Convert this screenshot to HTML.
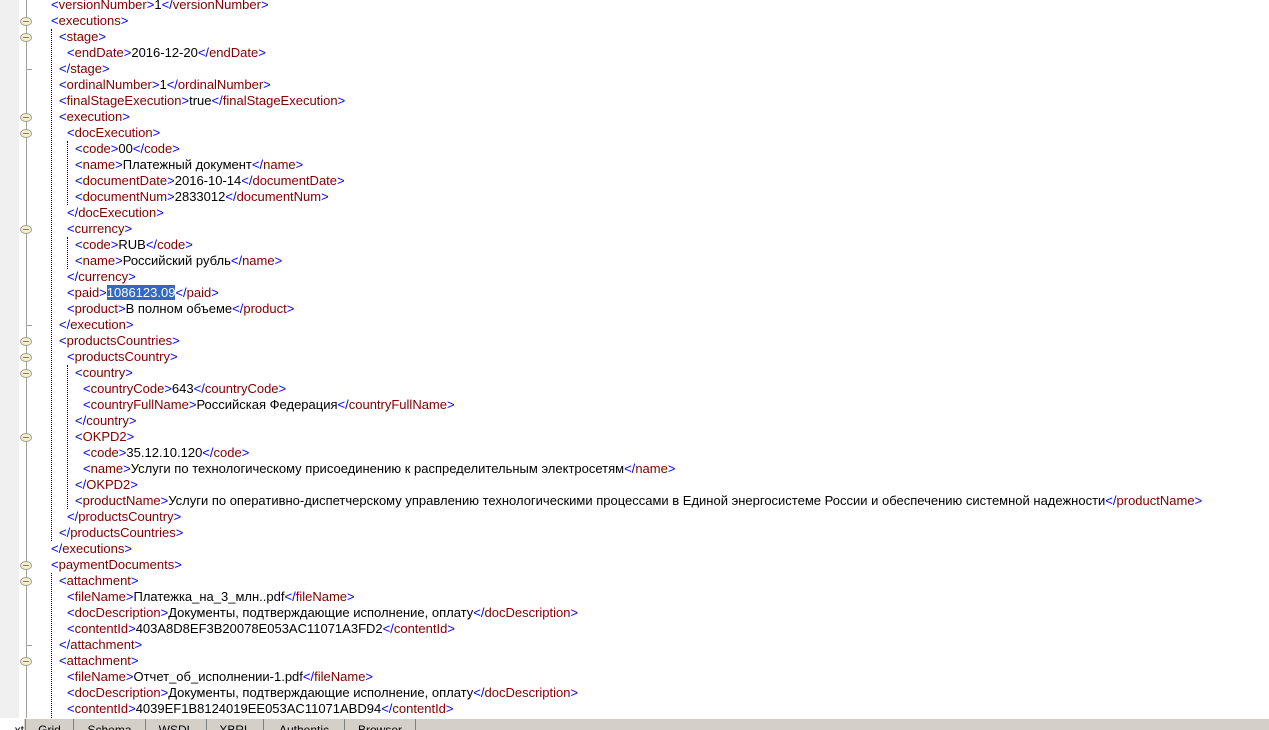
<!DOCTYPE html>
<html><head><meta charset="utf-8"><style>
body{margin:0;width:1269px;height:729px;overflow:hidden;background:#fff;position:relative;font-family:"Liberation Sans",Arial,sans-serif;font-size:13px}
.strip{position:absolute;left:0;top:0;width:19px;height:718px;background:#f0f0f0}
.vl{position:absolute;left:26px;top:0;width:1px;height:718px;background:#a0a0a0}
.l{position:absolute;height:16px;line-height:16px;white-space:nowrap;color:#000}
.b{color:#0000ff}.r{color:#800000}
.f{position:absolute;left:20px;width:12px;height:9px;border:1px solid #a0a090;border-radius:50%;background:#f4f0c8;box-sizing:border-box}
.f:after{content:"";position:absolute;left:2px;right:2px;top:3px;height:1px;background:#808070}
.t{position:absolute;left:26px;width:6px;height:1px;background:#a0a0a0}
.d{position:absolute;width:0;border-left:1px dotted #000}
.sel{background:#316ac5;color:#fff}
.tabs{position:absolute;left:0;top:718px;width:1269px;height:11px;background:#d4d0c8;border-top:1px solid #fff}
.tab{position:absolute;top:0;height:11px;border-left:1px solid #808080;overflow:hidden;font-size:12px;line-height:22px;text-align:center}
</style></head><body>
<div class="strip"></div><div class="vl"></div>

<div class="f" style="top:17px"></div>
<div class="f" style="top:33px"></div>
<div class="f" style="top:113px"></div>
<div class="f" style="top:129px"></div>
<div class="f" style="top:225px"></div>
<div class="f" style="top:337px"></div>
<div class="f" style="top:353px"></div>
<div class="f" style="top:369px"></div>
<div class="f" style="top:433px"></div>
<div class="f" style="top:561px"></div>
<div class="f" style="top:577px"></div>
<div class="f" style="top:657px"></div>
<div class="t" style="top:69px"></div>
<div class="t" style="top:325px"></div>
<div class="t" style="top:645px"></div>

<div class="d" style="left:51px;top:29px;height:512px"></div>
<div class="d" style="left:67px;top:141px;height:64px"></div>
<div class="d" style="left:67px;top:237px;height:32px"></div>
<div class="d" style="left:67px;top:365px;height:144px"></div>
<div class="d" style="left:51px;top:573px;height:145px"></div>

<div class="l" style="top:-3px;left:51px"><span class="b">&lt;</span><span class="r">versionNumber</span><span class="b">&gt;</span>1<span class="b">&lt;/</span><span class="r">versionNumber</span><span class="b">&gt;</span></div>
<div class="l" style="top:13px;left:51px"><span class="b">&lt;</span><span class="r">executions</span><span class="b">&gt;</span></div>
<div class="l" style="top:29px;left:59px"><span class="b">&lt;</span><span class="r">stage</span><span class="b">&gt;</span></div>
<div class="l" style="top:45px;left:67px"><span class="b">&lt;</span><span class="r">endDate</span><span class="b">&gt;</span>2016-12-20<span class="b">&lt;/</span><span class="r">endDate</span><span class="b">&gt;</span></div>
<div class="l" style="top:61px;left:59px"><span class="b">&lt;/</span><span class="r">stage</span><span class="b">&gt;</span></div>
<div class="l" style="top:77px;left:59px"><span class="b">&lt;</span><span class="r">ordinalNumber</span><span class="b">&gt;</span>1<span class="b">&lt;/</span><span class="r">ordinalNumber</span><span class="b">&gt;</span></div>
<div class="l" style="top:93px;left:59px"><span class="b">&lt;</span><span class="r">finalStageExecution</span><span class="b">&gt;</span>true<span class="b">&lt;/</span><span class="r">finalStageExecution</span><span class="b">&gt;</span></div>
<div class="l" style="top:109px;left:59px"><span class="b">&lt;</span><span class="r">execution</span><span class="b">&gt;</span></div>
<div class="l" style="top:125px;left:67px"><span class="b">&lt;</span><span class="r">docExecution</span><span class="b">&gt;</span></div>
<div class="l" style="top:141px;left:75px"><span class="b">&lt;</span><span class="r">code</span><span class="b">&gt;</span>00<span class="b">&lt;/</span><span class="r">code</span><span class="b">&gt;</span></div>
<div class="l" style="top:157px;left:75px"><span class="b">&lt;</span><span class="r">name</span><span class="b">&gt;</span>Платежный документ<span class="b">&lt;/</span><span class="r">name</span><span class="b">&gt;</span></div>
<div class="l" style="top:173px;left:75px"><span class="b">&lt;</span><span class="r">documentDate</span><span class="b">&gt;</span>2016-10-14<span class="b">&lt;/</span><span class="r">documentDate</span><span class="b">&gt;</span></div>
<div class="l" style="top:189px;left:75px"><span class="b">&lt;</span><span class="r">documentNum</span><span class="b">&gt;</span>2833012<span class="b">&lt;/</span><span class="r">documentNum</span><span class="b">&gt;</span></div>
<div class="l" style="top:205px;left:67px"><span class="b">&lt;/</span><span class="r">docExecution</span><span class="b">&gt;</span></div>
<div class="l" style="top:221px;left:67px"><span class="b">&lt;</span><span class="r">currency</span><span class="b">&gt;</span></div>
<div class="l" style="top:237px;left:75px"><span class="b">&lt;</span><span class="r">code</span><span class="b">&gt;</span>RUB<span class="b">&lt;/</span><span class="r">code</span><span class="b">&gt;</span></div>
<div class="l" style="top:253px;left:75px"><span class="b">&lt;</span><span class="r">name</span><span class="b">&gt;</span>Российский рубль<span class="b">&lt;/</span><span class="r">name</span><span class="b">&gt;</span></div>
<div class="l" style="top:269px;left:67px"><span class="b">&lt;/</span><span class="r">currency</span><span class="b">&gt;</span></div>
<div class="l" style="top:285px;left:67px"><span class="b">&lt;</span><span class="r">paid</span><span class="b">&gt;</span><span class="sel">1086123.09</span><span class="b">&lt;/</span><span class="r">paid</span><span class="b">&gt;</span></div>
<div class="l" style="top:301px;left:67px"><span class="b">&lt;</span><span class="r">product</span><span class="b">&gt;</span>В полном объеме<span class="b">&lt;/</span><span class="r">product</span><span class="b">&gt;</span></div>
<div class="l" style="top:317px;left:59px"><span class="b">&lt;/</span><span class="r">execution</span><span class="b">&gt;</span></div>
<div class="l" style="top:333px;left:59px"><span class="b">&lt;</span><span class="r">productsCountries</span><span class="b">&gt;</span></div>
<div class="l" style="top:349px;left:67px"><span class="b">&lt;</span><span class="r">productsCountry</span><span class="b">&gt;</span></div>
<div class="l" style="top:365px;left:75px"><span class="b">&lt;</span><span class="r">country</span><span class="b">&gt;</span></div>
<div class="l" style="top:381px;left:83px"><span class="b">&lt;</span><span class="r">countryCode</span><span class="b">&gt;</span>643<span class="b">&lt;/</span><span class="r">countryCode</span><span class="b">&gt;</span></div>
<div class="l" style="top:397px;left:83px"><span class="b">&lt;</span><span class="r">countryFullName</span><span class="b">&gt;</span>Российская Федерация<span class="b">&lt;/</span><span class="r">countryFullName</span><span class="b">&gt;</span></div>
<div class="l" style="top:413px;left:75px"><span class="b">&lt;/</span><span class="r">country</span><span class="b">&gt;</span></div>
<div class="l" style="top:429px;left:75px"><span class="b">&lt;</span><span class="r">OKPD2</span><span class="b">&gt;</span></div>
<div class="l" style="top:445px;left:83px"><span class="b">&lt;</span><span class="r">code</span><span class="b">&gt;</span>35.12.10.120<span class="b">&lt;/</span><span class="r">code</span><span class="b">&gt;</span></div>
<div class="l" style="top:461px;left:83px"><span class="b">&lt;</span><span class="r">name</span><span class="b">&gt;</span>Услуги по технологическому присоединению к распределительным электросетям<span class="b">&lt;/</span><span class="r">name</span><span class="b">&gt;</span></div>
<div class="l" style="top:477px;left:75px"><span class="b">&lt;/</span><span class="r">OKPD2</span><span class="b">&gt;</span></div>
<div class="l" style="top:493px;left:75px"><span class="b">&lt;</span><span class="r">productName</span><span class="b">&gt;</span>Услуги по оперативно-диспетчерскому управлению технологическими процессами в Единой энергосистеме России и обеспечению системной надежности<span class="b">&lt;/</span><span class="r">productName</span><span class="b">&gt;</span></div>
<div class="l" style="top:509px;left:67px"><span class="b">&lt;/</span><span class="r">productsCountry</span><span class="b">&gt;</span></div>
<div class="l" style="top:525px;left:59px"><span class="b">&lt;/</span><span class="r">productsCountries</span><span class="b">&gt;</span></div>
<div class="l" style="top:541px;left:51px"><span class="b">&lt;/</span><span class="r">executions</span><span class="b">&gt;</span></div>
<div class="l" style="top:557px;left:51px"><span class="b">&lt;</span><span class="r">paymentDocuments</span><span class="b">&gt;</span></div>
<div class="l" style="top:573px;left:59px"><span class="b">&lt;</span><span class="r">attachment</span><span class="b">&gt;</span></div>
<div class="l" style="top:589px;left:67px"><span class="b">&lt;</span><span class="r">fileName</span><span class="b">&gt;</span>Платежка_на_3_млн..pdf<span class="b">&lt;/</span><span class="r">fileName</span><span class="b">&gt;</span></div>
<div class="l" style="top:605px;left:67px"><span class="b">&lt;</span><span class="r">docDescription</span><span class="b">&gt;</span>Документы, подтверждающие исполнение, оплату<span class="b">&lt;/</span><span class="r">docDescription</span><span class="b">&gt;</span></div>
<div class="l" style="top:621px;left:67px"><span class="b">&lt;</span><span class="r">contentId</span><span class="b">&gt;</span>403A8D8EF3B20078E053AC11071A3FD2<span class="b">&lt;/</span><span class="r">contentId</span><span class="b">&gt;</span></div>
<div class="l" style="top:637px;left:59px"><span class="b">&lt;/</span><span class="r">attachment</span><span class="b">&gt;</span></div>
<div class="l" style="top:653px;left:59px"><span class="b">&lt;</span><span class="r">attachment</span><span class="b">&gt;</span></div>
<div class="l" style="top:669px;left:67px"><span class="b">&lt;</span><span class="r">fileName</span><span class="b">&gt;</span>Отчет_об_исполнении-1.pdf<span class="b">&lt;/</span><span class="r">fileName</span><span class="b">&gt;</span></div>
<div class="l" style="top:685px;left:67px"><span class="b">&lt;</span><span class="r">docDescription</span><span class="b">&gt;</span>Документы, подтверждающие исполнение, оплату<span class="b">&lt;/</span><span class="r">docDescription</span><span class="b">&gt;</span></div>
<div class="l" style="top:701px;left:67px;height:17px;overflow:hidden"><span class="b">&lt;</span><span class="r">contentId</span><span class="b">&gt;</span>4039EF1B8124019EE053AC11071ABD94<span class="b">&lt;/</span><span class="r">contentId</span><span class="b">&gt;</span></div>

<div class="tabs">
<div class="tab" style="left:-2px;width:26px;border-left:none;background:#fff;text-align:right">xt</div>
<div class="tab" style="left:25px;width:47px">Grid</div>
<div class="tab" style="left:73px;width:71px">Schema</div>
<div class="tab" style="left:145px;width:60px">WSDL</div>
<div class="tab" style="left:206px;width:56px">XBRL</div>
<div class="tab" style="left:263px;width:80px">Authentic</div>
<div class="tab" style="left:344px;width:70px">Browser</div>
<div class="tab" style="left:415px;width:1px"></div>
</div>
</body></html>
